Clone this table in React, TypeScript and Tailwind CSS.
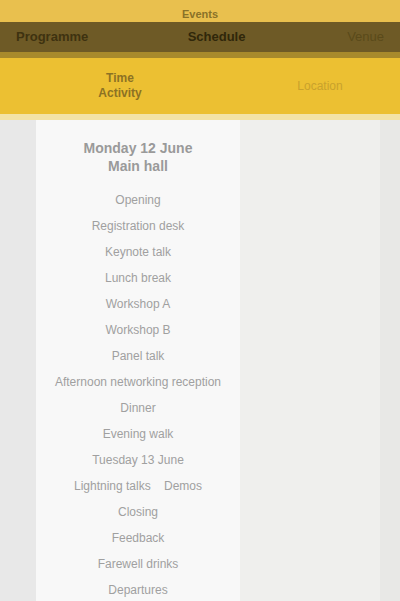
import React from "react";

const rows: string[] = [
  "Opening",
  "Registration desk",
  "Keynote talk",
  "Lunch break",
  "Workshop A",
  "Workshop B",
  "Panel talk",
  "Afternoon networking reception",
  "Dinner",
  "Evening walk",
  "Tuesday 13 June",
  "Lightning talks    Demos",
  "Closing",
  "Feedback",
  "Farewell drinks",
  "Departures",
];

export default function App() {
  return (
    <div
      className="w-[400px] h-[601px] overflow-hidden bg-[#f4f4f4] flex flex-col"
      style={{ fontFamily: '"Liberation Sans", Arial, sans-serif' }}
    >
      <div className="h-[22px] bg-[#e9c04e] flex items-end justify-center">
        <span className="text-[11px] font-bold text-[#8a7228]">Events</span>
      </div>
      <div className="h-[30px] bg-[#6e5a26] flex items-center px-4">
        <span className="w-[110px] text-[13px] font-bold text-[#3e3210]">Programme</span>
        <span className="flex-1 text-center text-[13px] font-bold text-[#30270a] pr-[40px]">Schedule</span>
        <span className="text-[13px] text-[#5a4a1a]">Venue</span>
      </div>
      <div className="h-[6px] bg-[#a88a2c]" />
      <div className="h-[56px] bg-[#ecc032] flex items-center">
        <div className="w-[240px] flex flex-col items-center text-[12px] text-[#8c7224] font-bold leading-tight">
          <span>Time</span>
          <span>Activity</span>
        </div>
        <div className="flex-1 flex flex-col items-center text-[12px] text-[#c9a22c] leading-tight">
          <span>Location</span>
        </div>
      </div>
      <div className="h-[6px] bg-[#f3e3a6]" />
      <div className="flex flex-1">
        <div className="w-[36px] bg-[#e8e8e8]" />
        <div className="w-[204px] bg-[#f8f8f8] flex flex-col items-center pt-[20px] gap-[8px]">
          <div className="flex flex-col items-center text-[14px] font-bold text-[#9a9a9a] leading-tight pb-2">
            <span>Monday 12 June</span>
            <span>Main hall</span>
          </div>
          {rows.map((r, i) => (
            <span key={i} className="text-[12px] text-center text-[#a0a0a0] whitespace-pre">
              {r}
            </span>
          ))}
        </div>
        <div className="flex-1 bg-[#efefed]" />
        <div className="w-[20px] bg-[#e8e8e6]" />
      </div>
    </div>
  );
}
